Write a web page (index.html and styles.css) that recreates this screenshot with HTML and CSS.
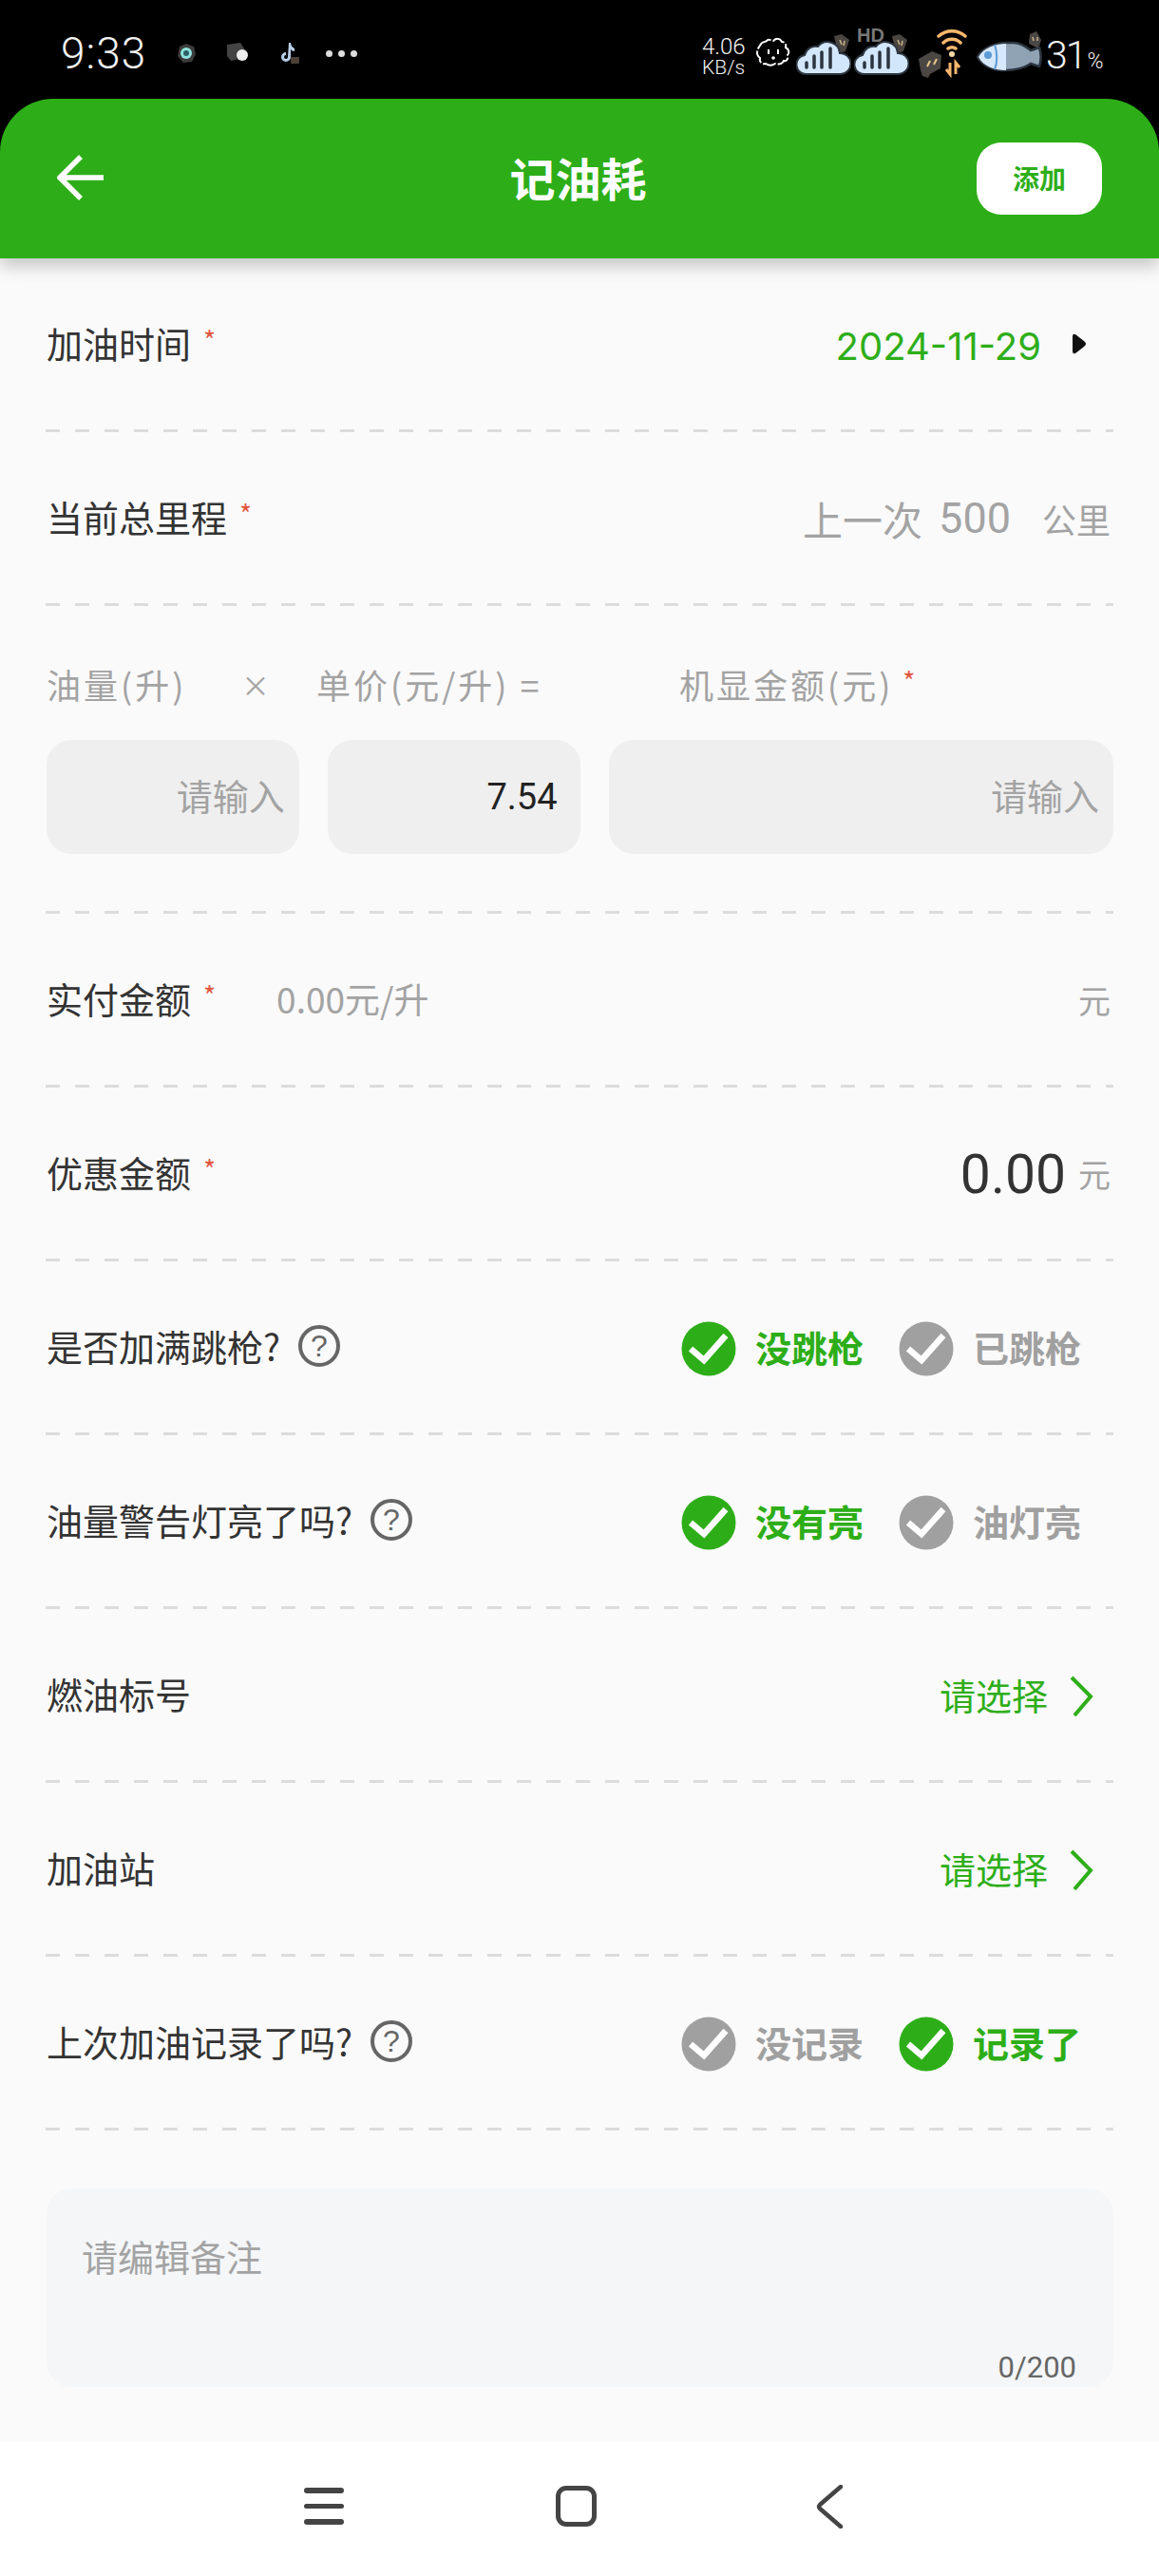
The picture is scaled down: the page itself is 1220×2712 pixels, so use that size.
FILE: index.html

```html
<!DOCTYPE html>
<html lang="zh-CN">
<head>
    <meta charset="UTF-8">
    <meta name="viewport" content="width=device-width, initial-scale=1.0">
    <title>记油耗</title>
    <link rel="stylesheet" href="styles.css">
</head>
<body>
    <div class="status-bar">
        <div class="status-left">
            <span class="clock">9:33</span>
            <svg class="notif" width="24" height="24" viewBox="0 0 24 24"><path d="M5 5l7-3 8 3 2 8-4 8-9 1-6-7z" fill="#3b3b3b"/><circle cx="12" cy="12" r="6" fill="#8fe3dc"/><circle cx="12" cy="12" r="3" fill="#2d5f66"/></svg>
            <svg class="notif" width="26" height="24" viewBox="0 0 26 24"><path d="M1 3l14-2 4 6v10l-14 3-4-5z" fill="#444"/><circle cx="17" cy="14" r="6" fill="#eee"/></svg>
            <svg class="notif" width="22" height="24" viewBox="0 0 22 24"><path d="M10 1l2 0c0 3 2 5 4 6v3c-2 0-3-1-4-2v8a5 5 0 1 1-5-5v3a2 2 0 1 0 2 2z" fill="#b9cfe8"/><rect x="12" y="16" width="9" height="7" rx="1" fill="#4a4038"/></svg>
            <div class="more"><i></i><i></i><i></i></div>
        </div>
        <div class="status-right">
            <div class="speed"><span>4.06</span><span>KB/s</span></div>
            <svg class="ic-face" width="40" height="36" viewBox="0 0 40 36"><path d="M6 10c2-5 5-3 7-5 2-3 5 0 7 0 3-3 7-3 9 1 3 0 5 3 4 6 4 2 4 6 2 8 1 4-1 7-4 6-2 4-6 4-9 3-3 2-7 2-10 0-4 1-7-2-6-6-4-3-4-8 0-13z" fill="none" stroke="#fff" stroke-width="2" stroke-dasharray="14 2"/><path d="M15 14v5M25 14v5" stroke="#fff" stroke-width="2"/><circle cx="20" cy="23" r="1.8" fill="#fff"/></svg>
            <svg class="ic-cloud" width="58" height="46" viewBox="0 0 58 46"><path d="M40 4l8-2 8 6-4 12-8 2z" fill="#4a4540"/><path d="M46 8l2 5M51 9l-1 5" stroke="#c9b48d" stroke-width="1.5"/><path d="M12 44a10 10 0 0 1-3-20 12 12 0 0 1 14-9 13 13 0 0 1 23 7 11 11 0 0 1 1 22z" fill="#d3e7fc" stroke="#2c3540" stroke-width="2"/><path d="M11 37v-5M19 37V25M27 37V21M36 37V17" stroke="#2c3540" stroke-width="3.5" stroke-linecap="round"/></svg>
            <div class="cloud-hd">
                <span class="hd">HD</span>
                <svg class="ic-cloud" width="58" height="46" viewBox="0 0 58 46"><path d="M40 4l8-2 8 6-4 12-8 2z" fill="#4a4540"/><path d="M46 8l2 5M51 9l-1 5" stroke="#c9b48d" stroke-width="1.5"/><path d="M12 44a10 10 0 0 1-3-20 12 12 0 0 1 14-9 13 13 0 0 1 23 7 11 11 0 0 1 1 22z" fill="#d3e7fc" stroke="#2c3540" stroke-width="2"/><path d="M11 37v-5M19 37V25M27 37V21M36 37V17" stroke="#2c3540" stroke-width="3.5" stroke-linecap="round"/></svg>
            </div>
            <svg class="ic-wifi" width="56" height="54" viewBox="0 0 56 54"><path d="M4 32l14-8 10 4-1 14-11 6-2 4-6-2-2-6z" fill="#4a4744"/><path d="M13 40l3-6M20 38l3-6" stroke="#e8c48a" stroke-width="2"/><path d="M25 8c8-7 20-7 28 0M30 15c5-5 13-5 18 0M35 21c3-2 5-2 8 0" fill="none" stroke="#f7b86e" stroke-width="3.5" stroke-linecap="round"/><circle cx="39" cy="27" r="3" fill="#f7d9a8"/><path d="M37 36v12l-4-5M43 48V36l4 5" fill="none" stroke="#f7b86e" stroke-width="3"/></svg>
            <svg class="ic-fish" width="70" height="48" viewBox="0 0 70 48"><path d="M56 14l1-10 7-3 5 9-3 9z" fill="#4a4744"/><path d="M60 7l1 4M65 7v4" stroke="#c9b48d" stroke-width="1.5"/><path d="M2 28C8 18 22 13 32 13h8c8 0 14 5 18 8l9-3c2 6 2 14 0 20l-9-3c-6 4-14 7-26 7C20 42 8 38 2 28z" fill="#8fa3b5" stroke="#2c3540" stroke-width="2.5"/><path d="M3 28C8 18 22 14 32 14v28C20 42 8 38 3 28z" fill="#d6e8fb"/><circle cx="13" cy="26" r="4" fill="#5c9bd6"/><path d="M20 15c3 8 3 19 0 26" fill="none" stroke="#5c9bd6" stroke-width="2"/></svg>
            <div class="battery">31<small>%</small></div>
        </div>
    </div>

    <header class="app-bar">
        <svg class="back" width="50" height="50" viewBox="0 0 50 50"><path d="M49 25H4M25 3L3 25l22 22" fill="none" stroke="#fff" stroke-width="5.5"/></svg>
        <h1>记油耗</h1>
        <button class="add-btn">添加</button>
    </header>

    <main class="form">
        <div class="row">
            <div class="label">加油时间<span class="req">*</span></div>
            <div class="value">
                <span class="date">2024-11-29</span>
                <svg class="caret" width="18" height="24" viewBox="0 0 18 24"><path d="M4 2l9 7q4 3 0 6L4 22q-3 1-3-2V4q0-3 3-2z" fill="#111"/></svg>
            </div>
        </div>
        <div class="row">
            <div class="label">当前总里程<span class="req">*</span></div>
            <div class="value">
                <span class="last">上一次<span class="last-num">500</span></span>
                <span class="unit-km">公里</span>
            </div>
        </div>
        <div class="row row-calc">
            <div class="calc-labels">
                <span class="cl-1">油量(升)</span>
                <span class="cl-x">×</span>
                <span class="cl-2">单价(元/升) =</span>
                <span class="cl-3">机显金额(元)<span class="req req-calc">*</span></span>
            </div>
            <div class="calc-inputs">
                <div class="box">请输入</div>
                <div class="box box-filled">7.54</div>
                <div class="box box-wide">请输入</div>
            </div>
        </div>
        <div class="row">
            <div class="label">实付金额<span class="req">*</span><span class="per-liter">0.00元/升</span></div>
            <div class="value"><span class="unit">元</span></div>
        </div>
        <div class="row">
            <div class="label">优惠金额<span class="req">*</span></div>
            <div class="value"><span class="amount">0.00</span><span class="unit">元</span></div>
        </div>
        <div class="row">
            <div class="label">是否加满跳枪?<span class="help">?</span></div>
            <div class="choices">
                <div class="choice on"><svg width="58" height="58" viewBox="0 0 58 58"><circle cx="29" cy="29" r="28.5"/><path d="M10 29l14 12 23-26" fill="none" stroke="#fff" stroke-width="6.5"/></svg><span>没跳枪</span></div>
                <div class="choice"><svg width="58" height="58" viewBox="0 0 58 58"><circle cx="29" cy="29" r="28.5"/><path d="M10 29l14 12 23-26" fill="none" stroke="#fff" stroke-width="6.5"/></svg><span>已跳枪</span></div>
            </div>
        </div>
        <div class="row">
            <div class="label">油量警告灯亮了吗?<span class="help">?</span></div>
            <div class="choices">
                <div class="choice on"><svg width="58" height="58" viewBox="0 0 58 58"><circle cx="29" cy="29" r="28.5"/><path d="M10 29l14 12 23-26" fill="none" stroke="#fff" stroke-width="6.5"/></svg><span>没有亮</span></div>
                <div class="choice"><svg width="58" height="58" viewBox="0 0 58 58"><circle cx="29" cy="29" r="28.5"/><path d="M10 29l14 12 23-26" fill="none" stroke="#fff" stroke-width="6.5"/></svg><span>油灯亮</span></div>
            </div>
        </div>
        <div class="row">
            <div class="label">燃油标号</div>
            <div class="value pick">
                <span>请选择</span>
                <svg width="26" height="44" viewBox="0 0 26 44"><path d="M3 2l20 20L6 42" fill="none" stroke="#2eae19" stroke-width="4"/></svg>
            </div>
        </div>
        <div class="row">
            <div class="label">加油站</div>
            <div class="value pick">
                <span>请选择</span>
                <svg width="26" height="44" viewBox="0 0 26 44"><path d="M3 2l20 20L6 42" fill="none" stroke="#2eae19" stroke-width="4"/></svg>
            </div>
        </div>
        <div class="row">
            <div class="label">上次加油记录了吗?<span class="help">?</span></div>
            <div class="choices">
                <div class="choice"><svg width="58" height="58" viewBox="0 0 58 58"><circle cx="29" cy="29" r="28.5"/><path d="M10 29l14 12 23-26" fill="none" stroke="#fff" stroke-width="6.5"/></svg><span>没记录</span></div>
                <div class="choice on"><svg width="58" height="58" viewBox="0 0 58 58"><circle cx="29" cy="29" r="28.5"/><path d="M10 29l14 12 23-26" fill="none" stroke="#fff" stroke-width="6.5"/></svg><span>记录了</span></div>
            </div>
        </div>
        <div class="note">
            <div class="note-text">请编辑备注</div>
            <div class="note-count">0/200</div>
        </div>
    </main>

    <nav class="nav-bar">
        <div class="menu-ic"><i></i><i></i><i></i></div>
        <div class="home-ic"></div>
        <svg width="28" height="46" viewBox="0 0 28 46"><path d="M26 2L4 21q-2 2 0 4l22 19" fill="none" stroke="#444" stroke-width="4.5" stroke-linecap="round"/></svg>
    </nav>
</body>
</html>
```

FILE: styles.css

```css
* {
    box-sizing: border-box;
}

body {
    margin: 0;
    width: 1220px;
    height: 2712px;
    display: flex;
    flex-direction: column;
    overflow: hidden;
    background-color: #000;
    font-family: "Noto Sans CJK SC", "Noto Sans", sans-serif;
    color: #333;
}

/* status bar */
.status-bar {
    height: 104px;
    flex: none;
    display: flex;
    justify-content: space-between;
    padding: 0 61px 0 64px;
    color: #f2f2f2;
}

.status-left {
    display: flex;
    align-items: center;
    height: 112px;
}

.clock {
    font-family: Roboto, sans-serif;
    font-weight: 300;
    font-size: 46px;
    letter-spacing: 1px;
    width: 120px;
}

.notif {
    margin-right: 30px;
}

.more {
    display: flex;
    gap: 6px;
    margin-left: -3px;
}

.more i {
    width: 7px;
    height: 7px;
    border-radius: 50%;
    background-color: #ddd;
}

.status-right {
    display: flex;
    align-items: flex-start;
    padding-top: 30px;
}

.speed {
    display: flex;
    flex-direction: column;
    width: 55px;
    margin-top: 8px;
    font-family: Roboto, sans-serif;
    font-weight: 300;
    font-size: 24px;
    line-height: 22px;
}

.speed span:last-child {
    font-size: 21px;
}

.ic-face {
    margin-top: 8px;
}

.ic-cloud {
    display: block;
    margin-top: 4px;
}

.status-right > .ic-cloud {
    margin-left: 4px;
}

.cloud-hd {
    position: relative;
    margin-left: 3px;
}

.hd {
    position: absolute;
    left: 3px;
    top: -3px;
    font-family: "Liberation Sans", sans-serif;
    font-weight: bold;
    font-size: 20px;
    line-height: 20px;
    color: #777;
}

.ic-wifi {
    margin-left: 6px;
}

.ic-fish {
    margin-left: 8px;
    margin-top: 2px;
}

.battery {
    width: 58px;
    margin-left: 4px;
    margin-top: 6px;
    font-family: Roboto, sans-serif;
    font-weight: 300;
    font-size: 41px;
    line-height: 44px;
    letter-spacing: -2px;
    white-space: nowrap;
}

.battery small {
    font-size: 23px;
    letter-spacing: 0;
    margin-left: 2px;
}

/* app bar */
.app-bar {
    height: 168px;
    flex: none;
    position: relative;
    z-index: 1;
    display: flex;
    align-items: center;
    justify-content: space-between;
    padding: 0 60px;
    background-color: #2dae18;
    border-radius: 56px 56px 0 0;
    box-shadow: 0 8px 18px rgba(0, 0, 0, 0.22);
}

.back {
    margin-top: -2px;
}

.app-bar h1 {
    margin: 0 3px 4px 0;
    position: absolute;
    left: 0;
    right: 0;
    text-align: center;
    font-size: 48px;
    font-weight: bold;
    color: #fff;
    pointer-events: none;
}

.add-btn {
    width: 132px;
    height: 76px;
    border: none;
    border-radius: 26px;
    background-color: #fff;
    color: #2dae18;
    font-family: inherit;
    font-size: 28px;
    font-weight: bold;
    padding: 0 0 2px;
}

/* form */
.form {
    flex: 1;
    background-color: #fafafa;
    padding: 0 48px;
}

.row {
    height: 183px;
    display: flex;
    align-items: center;
    justify-content: space-between;
    background-image: repeating-linear-gradient(90deg, #dcdcdc 0 15px, transparent 15px 31px);
    background-size: 100% 3px;
    background-position: left bottom;
    background-repeat: no-repeat;
}

.label {
    display: flex;
    align-items: center;
    padding-bottom: 6px;
    font-size: 38px;
    line-height: 50px;
    color: #333;
    margin-left: 1px;
}

.req {
    margin-left: 13px;
    margin-top: -8px;
    font-size: 28px;
    color: #e2553f;
}

.value {
    display: flex;
    align-items: center;
}

.date {
    margin-top: 2px;
    margin-right: 32px;
    font-family: Inter, sans-serif;
    font-size: 40px;
    color: #2eae19;
}

.caret {
    margin-right: 26px;
    margin-top: -4px;
}

.last {
    display: flex;
    align-items: center;
    padding-bottom: 2px;
    font-size: 42px;
    color: #a3a3a3;
}

.last-num {
    margin-left: 17px;
    font-family: Roboto, sans-serif;
    font-size: 45px;
}

.unit-km {
    margin-left: 33px;
    margin-right: 3px;
    padding-bottom: 2px;
    font-size: 36px;
    color: #a3a3a3;
}

.per-liter {
    margin-left: 64px;
    font-size: 37px;
    color: #a3a3a3;
}

.unit {
    padding-bottom: 3px;
    font-size: 34px;
    color: #a3a3a3;
    margin-right: 3px;
}

.amount {
    font-family: Roboto, sans-serif;
    font-size: 57px;
    color: #333;
    margin-right: 13px;
}

/* amount calculator row */
.row-calc {
    height: 324px;
    flex-direction: column;
    align-items: stretch;
    justify-content: flex-start;
    padding-top: 60px;
}

.calc-labels {
    display: flex;
    align-items: center;
    height: 50px;
    padding: 0 0 6px 1px;
    font-size: 36px;
    letter-spacing: 3px;
    color: #a3a3a3;
}

.cl-1 {
    width: 205px;
}

.cl-x {
    width: 79px;
    font-size: 30px;
}

.cl-2 {
    width: 382px;
}

.cl-3 {
    display: flex;
    align-items: center;
}

.req-calc {
    margin-left: 10px;
}

.calc-inputs {
    display: grid;
    grid-template-columns: 1fr 1fr 2fr;
    gap: 30px;
    margin-top: 31px;
    padding-left: 1px;
}

.box {
    height: 120px;
    display: flex;
    align-items: center;
    justify-content: flex-end;
    padding: 0 15px 5px 0;
    border-radius: 26px;
    background-color: #efefef;
    font-size: 38px;
    color: #a3a3a3;
}

.box-filled {
    padding: 0 24px 0 0;
    font-family: Roboto, sans-serif;
    font-size: 38px;
    color: #222;
}

/* yes / no choices */
.help {
    width: 44px;
    height: 44px;
    margin-left: 19px;
    display: flex;
    align-items: center;
    justify-content: center;
    border: 4.5px solid #666;
    border-radius: 50%;
    font-family: "Liberation Sans", sans-serif;
    font-size: 32px;
    line-height: 36px;
    color: #666;
}

.choices {
    display: flex;
    gap: 37px;
    margin-right: 34px;
}

.choice {
    display: flex;
    align-items: center;
    gap: 20px;
    font-size: 38px;
    font-weight: bold;
    color: #a0a0a0;
}

.choice span {
    padding-bottom: 5px;
}

.choice svg {
    fill: #a0a0a0;
}

.choice.on {
    color: #2dae18;
}

.choice.on svg {
    fill: #2dae18;
}

.pick {
    color: #2eae19;
    font-size: 38px;
    gap: 22px;
    margin-right: 21px;
}

.pick span {
    padding-bottom: 4px;
}

/* remark box */
.note {
    height: 209px;
    margin: 61px 0 0 1px;
    position: relative;
    padding: 46px 37px;
    border-radius: 26px;
    background-color: #f4f6f8;
}

.note-text {
    font-size: 38px;
    line-height: 50px;
    color: #a3a3a3;
}

.note-count {
    position: absolute;
    right: 39px;
    bottom: 2px;
    font-family: Roboto, sans-serif;
    font-size: 31px;
    color: #666;
}

/* bottom nav */
.nav-bar {
    height: 141px;
    flex: none;
    display: flex;
    align-items: center;
    padding: 0 0 6px 320px;
    background-color: #fff;
}

.menu-ic {
    width: 42px;
    display: flex;
    flex-direction: column;
    gap: 11px;
}

.menu-ic i {
    height: 5.5px;
    border-radius: 3px;
    background-color: #444;
}

.home-ic {
    width: 43px;
    height: 43px;
    margin-left: 223px;
    border: 5px solid #444;
    border-radius: 11px;
}

.nav-bar svg {
    margin-left: 231px;
}
```
